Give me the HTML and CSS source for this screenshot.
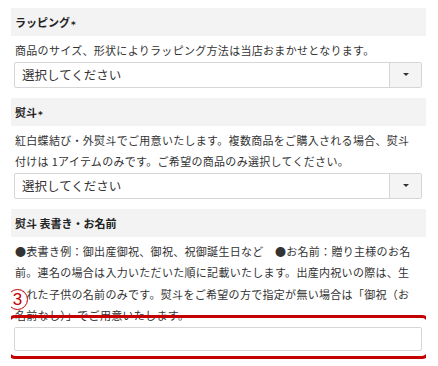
FILE: index.html
```html
<!DOCTYPE html>
<html lang="ja">
<head>
    <meta charset="UTF-8">
    <meta name="viewport" content="width=device-width, initial-scale=1.0">
    <title>ラッピング・熨斗</title>
    <link rel="stylesheet" href="styles.css">
</head>
<body>

    <div class="form">
        <div class="section">
            <div class="section-title">ラッピング<span class="req">*</span></div>
            <div class="section-desc">商品のサイズ、形状によりラッピング方法は当店おまかせとなります。</div>
            <div class="select-box">
                <select>
                    <option>選択してください</option>
                </select>
                <div class="select-arrow"><span class="caret"></span></div>
            </div>
        </div>

        <div class="section">
            <div class="section-title">熨斗<span class="req">*</span></div>
            <div class="section-desc">紅白蝶結び・外熨斗でご用意いたします。複数商品をご購入される場合、熨斗付けは 1アイテムのみです。ご希望の商品のみ選択してください。</div>
            <div class="select-box">
                <select>
                    <option>選択してください</option>
                </select>
                <div class="select-arrow"><span class="caret"></span></div>
            </div>
        </div>

        <div class="section">
            <div class="section-title">熨斗 表書き・お名前</div>
            <div class="section-desc">●表書き例：御出産御祝、御祝、祝御誕生日など　●お名前：贈り主様のお名前。連名の場合は入力いただいた順に記載いたします。出産内祝いの際は、生まれた子供の名前のみです。熨斗をご希望の方で指定が無い場合は「御祝（お名前なし）」でご用意いたします。</div>
            <div class="text-field">
                <input type="text">
                <!-- highlight marker over the field -->
                <span class="step-mark">3</span>
                <div class="highlight"></div>
            </div>
        </div>
    </div>

</body>
</html>
```

FILE: styles.css
```css
body {
    font-family: "Noto Sans CJK JP", "Noto Sans", sans-serif;
    background-color: white;
    color: #333;
    margin: 8px 12px 0 11px;
}

.form {
    width: 415px;
}

.section {
    margin-bottom: 10px;
}

.section-title {
    height: 28px;
    line-height: 28px;
    padding-left: 4px;
    background-color: #f3f3f3;
    font-size: 11px;
    font-weight: bold;
    color: #222;
}

.req {
    font-family: "DejaVu Sans", sans-serif;
    font-size: 9px;
    margin-left: 1px;
    position: relative;
    top: 1px;
}

.section-desc {
    padding: 4px 12px 0 4px;
    font-size: 11px;
    line-height: 21.5px;
    letter-spacing: 0.3px;
}

.select-box {
    display: flex;
    height: 26px;
    margin: 0 4px 0 3px;
    border: 1px solid #d6d6d6;
    border-radius: 2px;
    box-sizing: border-box;
    background-color: white;
}

.select-box select {
    flex: 1;
    appearance: none;
    -webkit-appearance: none;
    border: none;
    outline: none;
    background: transparent;
    padding: 0 7px;
    font-family: inherit;
    font-size: 12.5px;
    color: #333;
}

.select-arrow {
    width: 31px;
    display: flex;
    justify-content: center;
    align-items: center;
    background-color: #f4f4f4;
    border-left: 1px solid #d6d6d6;
}

.caret {
    width: 0;
    height: 0;
    border-left: 3px solid transparent;
    border-right: 3px solid transparent;
    border-top: 3px solid #333;
}

.text-field {
    position: relative;
    margin: 0 4px 0 3px;
}

.text-field input {
    display: block;
    width: 100%;
    height: 24px;
    box-sizing: border-box;
    border: 1px solid #d6d6d6;
    border-radius: 2px;
    font-family: inherit;
}

.highlight {
    position: absolute;
    top: -12px;
    left: -7px;
    right: -8px;
    bottom: -8px;
    border: 3px solid #c40000;
    border-radius: 8px;
    pointer-events: none;
}

.step-mark {
    position: absolute;
    top: -38px;
    left: -7px;
    width: 19px;
    height: 19px;
    border: 1.3px solid #c40000;
    border-radius: 50%;
    background-color: white;
    color: #c40000;
    font-family: "Liberation Sans", sans-serif;
    font-size: 17px;
    line-height: 19px;
    text-align: center;
}
```
